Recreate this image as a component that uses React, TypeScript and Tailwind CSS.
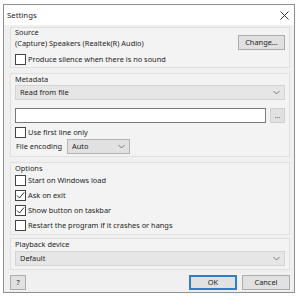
import React from "react";

function Check({ checked, label, className }: { checked?: boolean; label: string; className?: string }) {
  return (
    <div className={"flex items-center gap-[2px] " + (className || "h-[15px]")}>
      <span className="w-[11px] h-[11px] border border-[#444] bg-white flex items-center justify-center shrink-0">
        {checked && (
          <svg width="9" height="9" viewBox="0 0 9 9">
            <path d="M1 4.5 L3.5 7 L8 1.5" fill="none" stroke="#333" strokeWidth="1" />
          </svg>
        )}
      </span>
      <span>{label}</span>
    </div>
  );
}

function Chevron() {
  return (
    <svg width="7" height="5" viewBox="0 0 7 5">
      <path d="M0.5 1 L3.5 4 L6.5 1" fill="none" stroke="#777" strokeWidth="1" />
    </svg>
  );
}

function Select({ value, className }: { value: string; className?: string }) {
  return (
    <div
      className={
        "h-[15px] border flex items-center justify-between pl-[4px] pr-[4px] " +
        (className || "bg-[#e6e6e6] border-[#d4d4d4]")
      }
    >
      <span>{value}</span>
      <Chevron />
    </div>
  );
}

function Group({ children, className }: { children: React.ReactNode; className?: string }) {
  return (
    <div className={"border border-[#e0e0e0] bg-[#f3f3f3] pl-[4px] pr-[4px] " + (className || "")}>
      {children}
    </div>
  );
}

export default function App() {
  return (
    <div
      className="w-[300px] h-[300px] bg-white pl-[3px] pt-[4px] text-[7.4px] leading-[9px] text-[#1e1e1e]"
      style={{ fontFamily: '"Noto Sans", "Open Sans", sans-serif' }}
    >
      <div className="w-[292px] h-[289px] border border-[#8f8f8f] flex flex-col bg-[#f0f0f0]">
        <div className="h-[20px] bg-white flex items-center justify-between pl-[3px] pr-[5px] shrink-0">
          <span className="text-[7.8px]">Settings</span>
          <svg width="9" height="9" viewBox="0 0 9 9">
            <path d="M0.5 0.5 L8.5 8.5 M8.5 0.5 L0.5 8.5" stroke="#333" strokeWidth="1" />
          </svg>
        </div>
        <div className="flex-1 pl-[6px] pr-[4px] pt-[2px] flex flex-col">
          <Group className="pb-[1px]">
            <div className="h-[20px] flex items-start justify-between">
              <div className="flex flex-col">
                <span className="h-[8px] leading-[8px] flex items-center">Source</span>
                <span className="h-[10px] mt-[2px] flex items-center">(Capture) Speakers (Realtek(R) Audio)</span>
              </div>
              <div className="mt-[7px] w-[47px] h-[15px] bg-[#e1e1e1] border border-[#adadad] flex items-center justify-center shrink-0">
                Change...
              </div>
            </div>
            <Check label="Produce silence when there is no sound" className="h-[14px] mt-[4px]" />
          </Group>
          <Group className="mt-[5px] pb-[2px]">
            <div className="h-[8px] mt-[1px] flex items-center">Metadata</div>
            <Select value="Read from file" className="mt-[2px] bg-[#e6e6e6] border-[#d4d4d4]" />
            <div className="flex items-center gap-[4px] mt-[8px]">
              <div className="flex-1 h-[15px] bg-white border border-[#7a7a7a]" />
              <div className="w-[15px] h-[15px] bg-[#e1e1e1] border border-[#d0d0d0] flex items-center justify-center text-[7px] leading-[7px] text-[#555]">
                ...
              </div>
            </div>
            <Check label="Use first line only" className="h-[12px] mt-[3px]" />
            <div className="flex items-center h-[15px] mt-[1px]">
              <span className="w-[52px] pl-[1px]">File encoding</span>
              <Select value="Auto" className="w-[63px] bg-[#e1e1e1] border-[#b4b4b4]" />
            </div>
          </Group>
          <Group className="mt-[5px] pb-[1px]">
            <div className="h-[9px] mt-[1px] flex items-center">Options</div>
            <Check label="Start on Windows load" />
            <Check checked label="Ask on exit" />
            <Check checked label="Show button on taskbar" />
            <Check label="Restart the program if it crashes or hangs" />
          </Group>
          <Group className="mt-[3px] pb-[3px]">
            <div className="h-[8px] mt-[1px] flex items-center">Playback device</div>
            <Select value="Default" className="mt-[3px] bg-[#e6e6e6] border-[#d4d4d4]" />
          </Group>
          <div className="flex items-center justify-between mt-[5px]">
            <div className="w-[16px] h-[15px] bg-[#e1e1e1] border border-[#adadad] flex items-center justify-center">
              ?
            </div>
            <div className="flex gap-[5px]">
              <div className="w-[48px] h-[15px] bg-[#e1e1e1] border-2 border-[#2f7fc8] flex items-center justify-center">
                OK
              </div>
              <div className="w-[48px] h-[15px] bg-[#e1e1e1] border border-[#adadad] flex items-center justify-center">
                Cancel
              </div>
            </div>
          </div>
        </div>
      </div>
    </div>
  );
}
